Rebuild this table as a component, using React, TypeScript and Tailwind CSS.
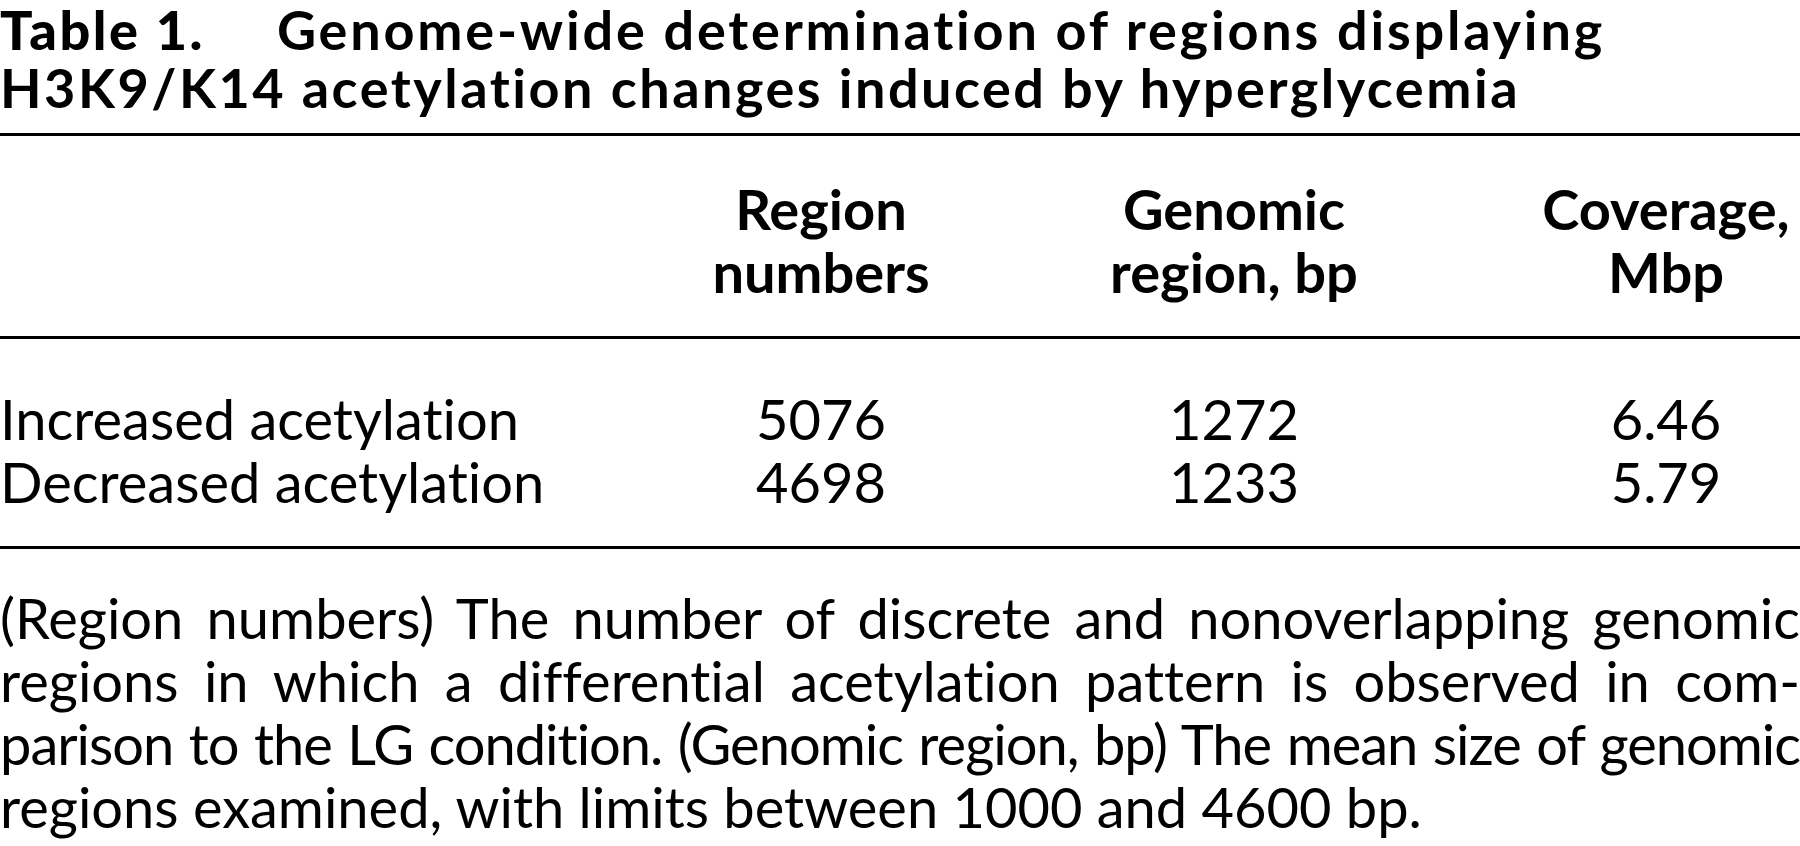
const rows = [
  { label: "Increased acetylation", regions: "5076", size: "1272", coverage: "6.46" },
  { label: "Decreased acetylation", regions: "4698", size: "1233", coverage: "5.79" },
];

const App = () => {
  return (
    <div className="w-[1800px] h-[846px] overflow-hidden bg-white text-black font-['Lato',sans-serif] [font-variant-ligatures:none]">
      <h1 className="pt-[1px] text-[54px] leading-[58px] font-bold tracking-[2.5px] whitespace-nowrap">
        <span className="font-black">Table 1.</span>
        <span className="ml-[72px] tracking-[2.8px]">Genome-wide determination of regions displaying</span>
        <br />
        H3K9/K14 acetylation changes induced by hyperglycemia
      </h1>

      <div className="mt-[16px] border-t-[3px] border-black" />

      <div className="w-[1886px] grid grid-cols-[620px_402px_424px_440px] text-[56px] leading-[63px] pt-[41px] pb-[33px] font-bold text-center">
        <div />
        <div>
          Region
          <br />
          numbers
        </div>
        <div>
          Genomic
          <br />
          region, bp
        </div>
        <div className="whitespace-nowrap">
          Coverage,
          <br />
          Mbp
        </div>
      </div>

      <div className="border-t-[3px] border-black" />

      <div className="pt-[48px] pb-[33px] text-[56px] leading-[63px]">
        {rows.map((r) => (
          <div key={r.label} className="w-[1886px] grid grid-cols-[620px_402px_424px_440px] text-center">
            <div className="text-left whitespace-nowrap">{r.label}</div>
            <div>{r.regions}</div>
            <div>{r.size}</div>
            <div>{r.coverage}</div>
          </div>
        ))}
      </div>

      <div className="border-t-[3px] border-black" />

      <div className="pt-[37px] text-[56px] leading-[63px] text-justify">
        <p className="[text-align-last:justify]">
          (Region numbers) The number of discrete and nonoverlapping genomic
        </p>
        <p className="[text-align-last:justify]">
          regions in which a differential acetylation pattern is observed in com-
        </p>
        <p className="[text-align-last:justify] tracking-[-1px]">
          parison to the LG condition. (Genomic region, bp) The mean size of genomic
        </p>
        <p>regions examined, with limits between 1000 and 4600 bp.</p>
      </div>
    </div>
  );
};

export default App;
